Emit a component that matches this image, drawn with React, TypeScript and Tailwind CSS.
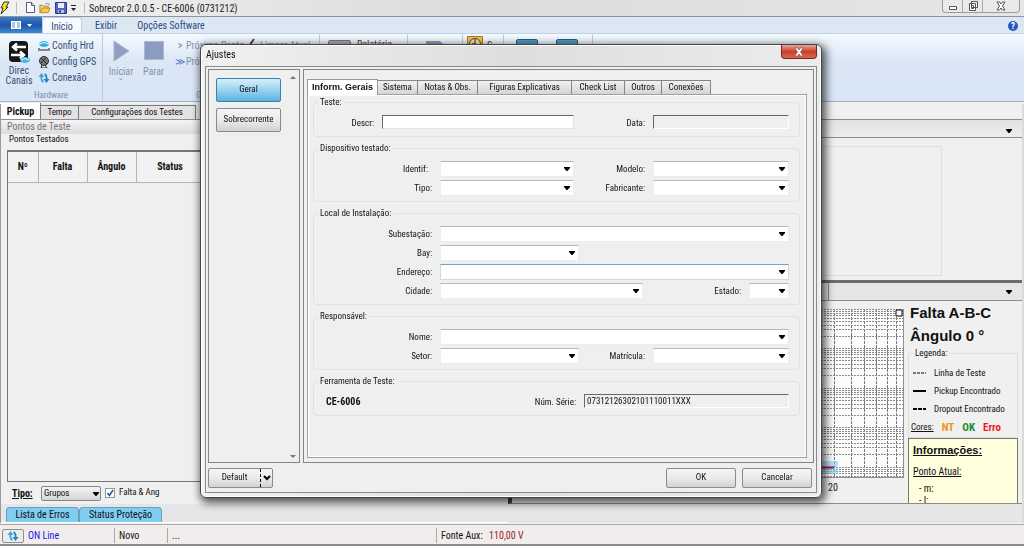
import React from "react";
import clsx from "clsx";

interface ComboProps {
  id: string;
  className?: string;
  active?: boolean;
}

interface LabelProps {
  htmlFor: string;
  className?: string;
  children: React.ReactNode;
}

const chartColumns = [180, 215, 240, 262, 280, 296, 322, 339, 352, 364, 375, 384, 391];
const decades = [0, 39, 79, 118, 158];

function Label({ htmlFor, className, children }: LabelProps) {
  return (
    <label htmlFor={htmlFor} className={clsx("text-right leading-4", className)}>
      {children}
    </label>
  );
}

function Caret({ className }: { className?: string }) {
  return (
    <svg viewBox="0 0 6 4" className={clsx("w-1.5 h-1", className)} aria-hidden="true">
      <path d="M0 0h6v1L3.5 4h-1L0 1z" fill="#000" />
    </svg>
  );
}

function Combo({ id, className, active }: ComboProps) {
  return (
    <div className={clsx("relative h-4", className)}>
      <select
        id={id}
        className={clsx(
          "block w-full h-full appearance-none bg-white border outline-none px-1",
          active ? "border-[#c5dcec] border-t-[#7ba3c4]" : "border-[#ececec] border-t-[#b4b7bb]"
        )}
      >
        <option value=""></option>
      </select>
      <Caret className="absolute right-1 top-1.5 pointer-events-none" />
    </div>
  );
}

function Group({ title, children }: { title: string; children: React.ReactNode }) {
  return (
    <fieldset className="border border-[#dfe1e3] rounded-sm pt-[7px] pb-[5px] pr-2.5 flex flex-col gap-[3px] min-w-0">
      <legend className="ml-1 px-0.5 leading-[11px]">{title}</legend>
      {children}
    </fieldset>
  );
}

function Row({ children }: { children: React.ReactNode }) {
  return <div className="flex gap-2">{children}</div>;
}

function TitleBar() {
  return (
    <header className="flex items-center h-[17px] shrink-0 pl-1 bg-linear-to-r from-[#f2f2f2] via-[#dcdcdc] via-45% to-[#e6e6e6] border-b border-[#8d949c] text-[10px] text-[#222]">
      <svg viewBox="0 0 10 14" className="w-2.5 h-3.5 -ml-1" aria-hidden="true">
        <path d="M4 1h5L6 6h2L1 13l2-6H1z" fill="#f5e51b" stroke="#333" strokeWidth="1" />
      </svg>
      <span className="w-px h-3 bg-[#bbb] ml-1.5" />
      <div className="flex items-center gap-1 ml-2">
        <button aria-label="Novo arquivo">
          <svg viewBox="0 0 10 12" className="block w-2.5 h-3">
            <path d="M1.500.5h5l3 3v7h-8z" fill="#fff" stroke="#4f5c86" />
            <path d="M6.500.5v3h3" fill="#ccd6ee" stroke="#4f5c86" />
          </svg>
        </button>
        <button aria-label="Abrir">
          <svg viewBox="0 0 13 12" className="block w-3 h-3">
            <path d="M1 11V3h3l1 1h5v2" fill="#f6d273" stroke="#ac8332" />
            <path d="M1 11l3-5h8l-2 5z" fill="#ffc94a" stroke="#b8862c" />
            <path d="M7 2c2-2 4-1 4 1" fill="none" stroke="#446fb4" />
          </svg>
        </button>
        <button aria-label="Salvar">
          <svg viewBox="0 0 12 12" className="block w-3 h-3">
            <path d="M.5.5h11v11h-11z" fill="#5362c6" stroke="#2e3990" />
            <path d="M3 1h6v5H3z" fill="#e9edff" />
            <path d="M3 8h6v3H3z" fill="#b9c1ea" />
            <path d="M4 8.500h2v2H4z" fill="#27307c" />
          </svg>
        </button>
        <button aria-label="Personalizar">
          <svg viewBox="0 0 5 7" className="block w-[5px] h-[7px]">
            <path d="M0 0h5v1H0zM0 3h5L2.500 6z" fill="#222" />
          </svg>
        </button>
      </div>
      <span className="w-px h-3 bg-[#bbb] ml-2 mr-1" />
      <h1>Sobrecor 2.0.0.5 - CE-6006 (0731212)</h1>
      <div className="flex ml-auto mr-1 self-start h-[13px] border border-t-0 border-[#9c9c9c] rounded-b-sm divide-x divide-[#a9a9a9] bg-[#e9e9e9]">
        <button aria-label="Minimizar" className="w-5 grid place-items-center">
          <svg viewBox="0 0 10 10" className="w-2.5 h-2.5">
            <path d="M1.500 5.500h7v3h-7z" fill="#fff" stroke="#555" />
          </svg>
        </button>
        <button aria-label="Restaurar" className="w-5 grid place-items-center">
          <svg viewBox="0 0 10 10" className="w-2.5 h-2.5">
            <path d="M3.500.5h6v6h-6zM1.500 2.500h6v7h-6zM3.500 4.500h2v3h-2z" fill="#fff" stroke="#555" />
          </svg>
        </button>
        <button aria-label="Fechar" className="w-9 grid place-items-center">
          <svg viewBox="0 0 10 10" className="w-2.5 h-2.5">
            <path d="M1 1h2.500L5 3l1.500-2H9L6.500 5 9 9H6.500L5 7 3.500 9H1l2.500-4z" fill="#fff" stroke="#555" />
          </svg>
        </button>
      </div>
    </header>
  );
}

function Ribbon() {
  return (
    <div className="shrink-0">
      <nav className="flex items-end h-[17px] bg-[#dce7f4] text-[10px] text-[#2a4c7d] border-b border-[#c3d2e5]">
        <button aria-label="Arquivo" className="flex items-center justify-center gap-1.5 w-[42px] h-4 bg-linear-to-b from-[#3c7cc9] via-[#1f56a5] to-[#3f8bd8]">
          <svg viewBox="0 0 10 8" className="w-2.5 h-2">
            <path d="M0 0h10v8H0z" fill="#fff" />
            <path d="M1 2h3M1 4h3M1 6h3M6 2h3M6 4h3M6 6h3" stroke="#5e8fce" />
          </svg>
          <svg viewBox="0 0 5 3" className="w-[5px] h-[3px]">
            <path d="M0 0h5L2.500 3z" fill="#fff" />
          </svg>
        </button>
        <button className="w-10 h-4 pt-0.5 leading-[13px] bg-[#f7fbff] border border-b-0 border-[#bccfe4] rounded-t-sm">Início</button>
        <button className="w-12 h-4 pt-0.5 leading-[14px]">Exibir</button>
        <button className="w-[82px] h-4 pt-0.5 leading-[14px]">Opções Software</button>
        <button aria-label="Ajuda" className="ml-auto mr-1.5 mb-0.5 w-2.5 h-2.5 rounded-full bg-[#2459c4] text-white font-bold text-[9px] leading-[10px]">
          ?
        </button>
      </nav>
      <div className="flex h-[68px] bg-linear-to-b from-[#f4f9fe] via-[#dbe7f5] via-40% to-[#d9e6f6] border-b border-[#a5b2c2] text-[10px] text-[#35507a]">
        <section className="flex flex-col w-[103px] border-r border-[#bccadb]">
          <div className="flex flex-1 pt-1.5">
            <button className="w-[38px] flex flex-col items-center leading-[10px]">
              <svg viewBox="0 0 24 24" className="w-6 h-6 mb-0.5">
                <rect x="2" y="1" width="19" height="21" rx="4" fill="#171717" />
                <path d="M19 7H7M10 3.500L6 7l4 3.500M4 15h12M13 11.500l4 3.500-4 3.500" fill="none" stroke="#fff" strokeWidth="2.500" />
                <ellipse cx="18" cy="20" rx="5" ry="3" fill="#46b8e6" />
                <path d="M14 20q4-3 8 0" fill="none" stroke="#d9f4ff" />
              </svg>
              Direc
              <br />
              Canais
            </button>
            <div className="flex flex-col gap-1 items-start leading-3">
              <button className="flex items-center gap-0.5">
                <svg viewBox="0 0 12 12" className="w-3 h-3">
                  <ellipse cx="6" cy="4" rx="5" ry="3" fill="#39aedf" />
                  <path d="M1 4q5-3 10 0" fill="none" stroke="#e3f7ff" />
                  <path d="M1 8v3M3 9v2M5 9v2M7 9v2M9 9v2M11 8v3" stroke="#222" />
                </svg>
                Config Hrd
              </button>
              <button className="flex items-center gap-0.5">
                <svg viewBox="0 0 12 12" className="w-3 h-3">
                  <circle cx="6" cy="5" r="4.500" fill="#777" stroke="#333" />
                  <path d="M3 2l6 6M8 2L3 7M4 9l-1 3h6L7 9" fill="none" stroke="#222" />
                </svg>
                Config GPS
              </button>
              <button className="flex items-center gap-0.5">
                <SyncIcon className="w-3 h-3" />
                Conexão
              </button>
            </div>
          </div>
          <span className="text-center text-[9px] leading-3 text-[#7d8da6]">Hardware</span>
        </section>
        <section className="flex flex-col w-[217px] border-r border-[#bccadb] text-[#8392aa]">
          <div className="flex flex-1 pt-1.5">
            <button disabled className="w-9 flex flex-col items-center leading-3">
              <svg viewBox="0 0 20 24" className="w-5 h-6 mb-0.5">
                <path d="M3 1l15 10L3 21z" fill="#8fa0c3" stroke="#a8b5d0" />
              </svg>
              Iniciar
              <svg viewBox="0 0 5 3" className="w-1 h-0.5">
                <path d="M0 0l2.500 3L5 0" fill="none" stroke="#8392aa" />
              </svg>
            </button>
            <button disabled className="w-[29px] flex flex-col items-center leading-3">
              <svg viewBox="0 0 20 24" className="w-5 h-6 mb-0.5">
                <path d="M.5 1.500h19v18H.5z" fill="#8c9cc0" stroke="#aab7d3" />
              </svg>
              Parar
            </button>
            <div className="flex flex-col items-start gap-1 pl-1.5 leading-3 whitespace-nowrap">
              <button disabled><span className="inline-block w-3 text-[#5477bb]">&gt;</span>Próximo Ponto</button>
              <button disabled><span className="inline-block w-3 text-[#5477bb]">≫</span>Próximo Teste</button>
            </div>
            <svg viewBox="0 0 8 8" className="w-2 h-2 ml-1 -mt-0.5">
              <path d="M1 8l5-7" stroke="#444" strokeWidth="2" />
            </svg>
            <span className="leading-3 pl-1">Limpar Atual</span>
          </div>
          <span className="text-center text-[9px] leading-3">Geração</span>
        </section>
        <section className="flex gap-1.5 items-start w-[88px] pt-1.5 pl-2 border-r border-[#bccadb]">
          <span className="w-[23px] h-4 rounded-t-xs bg-[#a9adb3] border border-[#777]" />
          <span className="leading-[10px] text-[#444]">Relatório</span>
        </section>
        <section className="flex justify-center w-[55px] pt-1.5 border-r border-[#bccadb]">
          <svg viewBox="0 0 18 10" className="w-[18px] h-2.5">
            <path d="M0 1h14l4 4-4 4H0z" fill="#8c9cc0" />
          </svg>
        </section>
        <section className="flex items-start w-[41px] pt-0.5 pl-1 border-r border-[#bccadb]">
          <svg viewBox="0 0 16 16" className="w-4 h-4">
            <path d="M.5.5h15v15H.5z" fill="#e6c15a" stroke="#a67d20" />
            <circle cx="8" cy="8" r="5.500" fill="#f8e9b1" stroke="#5c4616" />
            <path d="M8 3v5H5" fill="none" stroke="#222" />
          </svg>
          <span className="leading-3 pt-1 pl-1 text-[#444]">S</span>
        </section>
        <section className="flex gap-[18px] items-start w-[89px] pt-[5px] pl-3 border-r border-[#bccadb]">
          <span className="w-[22px] h-4 bg-[#4f9ac4] border border-[#24607f] rounded-t-xs" />
          <span className="w-[22px] h-4 bg-[#4f9ac4] border border-[#24607f] rounded-t-xs" />
        </section>
      </div>
    </div>
  );
}

function SyncIcon({ className }: { className?: string }) {
  return (
    <svg viewBox="0 0 12 12" className={className} aria-hidden="true">
      <path d="M5.500 10Q3 9 3.500 4" fill="none" stroke="#3ba7d6" strokeWidth="1.800" />
      <path d="M.5 5l3-4 3 4z" fill="#3ba7d6" />
      <path d="M6.500 2Q9 3 8.500 8" fill="none" stroke="#2583b8" strokeWidth="1.800" />
      <path d="M5.500 7l3 4 3-4z" fill="#2583b8" />
    </svg>
  );
}

function TestPanel() {
  return (
    <section className="flex flex-col min-h-0 border-l border-[#9a9a9a] bg-[#f0f0f0]">
      <div className="flex items-end h-4 border-b border-[#8f8f8f] bg-[#e9eaec] text-[9px]">
        <button className="w-10 h-4 bg-white border-r border-[#777] font-bold text-[10px]">Pickup</button>
        <button className="w-[38px] h-3.5 border-t border-r border-[#777] bg-[#e3e3e3]">Tempo</button>
        <button className="w-[117px] h-3.5 border-t border-r border-[#777] bg-[#e3e3e3]">Configurações dos Testes</button>
      </div>
      <h2 className="pl-1.5 leading-[14px] text-[10px] text-[#777] bg-linear-to-b from-[#f4f4f4] to-[#dcdcdc]">Pontos de Teste</h2>
      <h3 className="pl-2 leading-[11px] text-[9px]">Pontos Testados</h3>
      <div className="flex-1 min-h-0 mt-[5px] mx-1.5 border border-t-2 border-[#747474] bg-[#efefef]">
        <table className="w-full table-fixed border-collapse text-[10px]">
          <thead>
            <tr className="h-[30px] bg-[#f2f2f2] border-b border-[#b5b5b5] divide-x divide-[#b5b5b5]">
              <th className="w-[30px]">Nº</th>
              <th className="w-[49px]">Falta</th>
              <th className="w-[49px]">Ângulo</th>
              <th className="w-[68px]">Status</th>
              <th></th>
            </tr>
          </thead>
        </table>
      </div>
      <div className="flex items-center h-[22px] pl-[11px] text-[9px]">
        <label htmlFor="tipo-grupo" className="font-bold underline text-[10px] w-[29px]">Tipo:</label>
        <div className="relative">
          <select id="tipo-grupo" className="block w-[60px] h-[15px] pl-0.5 appearance-none border border-[#858585] rounded-xs bg-linear-to-b from-[#f4f4f4] to-[#d6d6d6]">
            <option>Grupos</option>
          </select>
          <Caret className="absolute right-0.5 top-1.5 pointer-events-none" />
        </div>
        <label className="flex items-center gap-1 ml-1">
          <span className="relative w-2.5 h-2.5">
            <input type="checkbox" defaultChecked className="peer block appearance-none w-2.5 h-2.5 border border-[#8e9aa8] bg-white" />
            <svg viewBox="0 0 10 10" className="absolute inset-0 hidden peer-checked:block pointer-events-none">
              <path d="M2.500 5l2 2.500L8 2" fill="none" stroke="#2a53a0" strokeWidth="1.500" />
            </svg>
          </span>
          Falta &amp; Ang
        </label>
      </div>
      <div className="flex items-end h-[19px] pl-[5px] text-[10px] bg-[#e4e6e8] border-b border-white">
        <button className="w-[73px] h-[15px] leading-[14px] bg-[#7fcdf1] border border-b-0 border-[#6ba0bd] rounded-t">Lista de Erros</button>
        <button className="w-[83px] h-[15px] leading-[14px] bg-[#7fcdf1] border border-b-0 border-[#6ba0bd] rounded-t">Status Proteção</button>
      </div>
    </section>
  );
}

function Chart() {
  return (
    <svg viewBox="0 0 392 196" preserveAspectRatio="xMaxYMin slice" className="w-full h-full" role="img" aria-label="Gráfico de pickup">
      <rect width="392" height="169" fill="#fcfcfc" />
      {chartColumns.map((x) => (
        <path key={x} d={`M${x}.5 0V169`} stroke="#777" strokeDasharray="3 1" />
      ))}
      {decades.map((top) =>
        [10, 9, 8, 7, 6, 5, 4, 3, 2].map((n) => {
          const y = Math.round(top + 39 * (1 - Math.log10(n)));
          return y < 169 ? <path key={`${top}-${n}`} d={`M0 ${y}.5H392`} stroke="#8a8a8a" strokeDasharray="2 1" /> : null;
        })
      )}
      <path d="M0 152h326v13H0z" fill="#8ccbe8" fillOpacity="0.6" />
      <path d="M0 158.500h322" stroke="#a3134c" strokeWidth="2" />
      <path d="M0 168.500h392M391.500 0v169" stroke="#8f8f8f" />
      <path d="M384 1h6v6h-6z" fill="#fff" stroke="#000" />
      <text x="321" y="182" textAnchor="middle" fontSize="10" fill="#222">20</text>
    </svg>
  );
}

function ResultPanel() {
  return (
    <section className="flex flex-col min-h-0 bg-[#f0f0f0] border-r-2 border-[#dadada]">
      <div className="flex justify-end items-center h-[19px] mt-[15px] pr-2.5 border-y border-[#8b8b8b] bg-linear-to-b from-[#e2e2e2] to-[#ececec]">
        <Caret className="mt-1" />
      </div>
      <div className="h-[145px] border-b-3 border-[#6d6d6d] pt-2 pb-1">
        <div className="h-full mr-20 border border-[#dedede]" />
      </div>
      <div className="flex items-center h-[18px] pr-2.5 border-b border-[#8b8b8b] bg-[#e6e6e6]">
        <span className="w-[321px] h-full border-r border-[#8b8b8b]" />
        <Caret className="ml-auto" />
      </div>
      <div className="flex flex-1 min-h-0 border-b border-[#8b8b8b] border-l-4 border-l-[#444] pt-2">
        <div className="flex-1 min-w-0 min-h-0">
          <Chart />
        </div>
        <aside className="flex flex-col w-[118px] shrink-0 min-h-0 pl-1 pr-1 overflow-hidden -mt-2 text-[10px]">
          <p className="pl-0.5 font-bold text-[15px] leading-[23px] whitespace-nowrap font-['Liberation_Sans',sans-serif]">
            Falta A-B-C
            <br />
            Ângulo 0 °
          </p>
          <fieldset className="border border-[#dfdfdf] px-1 text-[9px]">
            <legend className="leading-[13px] px-0.5">Legenda:</legend>
            <ul className="leading-[18px] pt-1 whitespace-nowrap">
              <li className="flex items-center gap-2">
                <svg viewBox="0 0 13 2" className="w-[13px] h-0.5"><path d="M0 1h13" stroke="#000" strokeDasharray="3 1" /></svg>
                Linha de Teste
              </li>
              <li className="flex items-center gap-2">
                <svg viewBox="0 0 13 2" className="w-[13px] h-0.5"><path d="M0 1h13" stroke="#000" strokeWidth="2" /></svg>
                Pickup Encontrado
              </li>
              <li className="flex items-center gap-2">
                <svg viewBox="0 0 13 2" className="w-[13px] h-0.5"><path d="M0 1h13" stroke="#000" strokeWidth="2" strokeDasharray="4 1" /></svg>
                Dropout Encontrado
              </li>
            </ul>
            <p className="flex gap-2 leading-[19px] -ml-0.5">
              <span className="underline">Cores:</span>
              <b className="text-[11px] text-[#f5921e]">NT</b>
              <b className="text-[11px] text-[#1d8a2c]">OK</b>
              <b className="text-[11px] text-[#ee1c25]">Erro</b>
            </p>
          </fieldset>
          <div className="flex-1 min-h-0 overflow-hidden pl-1 bg-[#ffffde] border border-b-0 border-[#777]">
            <h2 className="font-bold underline text-[11px] leading-[22px] font-['Liberation_Sans',sans-serif]">Informações:</h2>
            <p className="underline leading-[22px]">Ponto Atual:</p>
            <p className="pl-1.5 leading-3">- m:</p>
            <p className="pl-1.5 leading-3">- I:</p>
          </div>
        </aside>
      </div>
      <div className="h-[19px] bg-[#e6e6e6]" />
    </section>
  );
}

function StatusBar() {
  return (
    <footer className="shrink-0 border-t border-[#aaa] bg-[#f1eded] border-b-2 border-b-[#8c8c8c] text-[10px]">
      <div className="flex items-center h-[19px] pl-0.5 pt-0.5 leading-[15px]">
        <button aria-label="Atualizar" className="grid place-items-center w-[22px] h-3.5 border border-[#8f8f8f] bg-[#ececec] rounded-xs">
          <SyncIcon className="w-3 h-3" />
        </button>
        <span className="w-[90px] pl-1 text-[#1f16e8]">ON Line</span>
        <span className="w-[53px] pl-1 border-l border-[#aaa]">Novo</span>
        <span className="w-[269px] pl-1 border-l border-[#aaa]">...</span>
        <span className="pl-1 border-l border-[#aaa]">
          Fonte Aux: <span className="pl-1 text-[#9c1c1c]">110,00 V</span>
        </span>
      </div>
    </footer>
  );
}

const tabs = [
  { name: "Sistema", width: "w-10" },
  { name: "Notas & Obs.", width: "w-[60px]" },
  { name: "Figuras Explicativas", width: "w-[94px]" },
  { name: "Check List", width: "w-[53px]" },
  { name: "Outros", width: "w-[37px]" },
  { name: "Conexões", width: "w-[49px]" },
];

const buttonStyle = "border border-[#8b8b8b] rounded-xs bg-linear-to-b from-[#f4f4f4] via-[#ebebeb] to-[#d2d2d2]";

function SettingsForm() {
  return (
    <div className="flex flex-col gap-1.5 border border-[#a0a0a0] shadow-[inset_0_0_0_1px_#fff] pt-0.5 pb-[41px] pl-[5px] pr-1.5">
      <Group title="Teste:">
        <Row>
          <Label htmlFor="descr" className="w-[60px]">Descr:</Label>
          <input id="descr" className="w-48 h-3.5 px-1 bg-white border border-[#e3e3e3] border-t-[#696969] border-l-[#696969] outline-none" />
          <Label htmlFor="data" className="w-[63px]">Data:</Label>
          <input id="data" readOnly className="flex-1 min-w-0 h-3.5 px-1 bg-[#efefef] border border-white border-t-[#696969] border-l-[#696969]" />
        </Row>
      </Group>
      <Group title="Dispositivo testado:">
        <Row>
          <Label htmlFor="identif" className="w-[118px] pr-1">Identif:</Label>
          <Combo id="identif" className="w-[134px]" />
          <Label htmlFor="modelo" className="w-[63px]">Modelo:</Label>
          <Combo id="modelo" className="flex-1" />
        </Row>
        <Row>
          <Label htmlFor="tipo" className="w-[118px]">Tipo:</Label>
          <Combo id="tipo" className="w-[134px]" />
          <Label htmlFor="fabricante" className="w-[63px]">Fabricante:</Label>
          <Combo id="fabricante" className="flex-1" />
        </Row>
      </Group>
      <Group title="Local de Instalação:">
        <Row>
          <Label htmlFor="subestacao" className="w-[118px]">Subestação:</Label>
          <Combo id="subestacao" className="flex-1" />
        </Row>
        <Row>
          <Label htmlFor="bay" className="w-[118px]">Bay:</Label>
          <Combo id="bay" className="w-[139px]" />
        </Row>
        <Row>
          <Label htmlFor="endereco" className="w-[118px]">Endereço:</Label>
          <Combo id="endereco" className="flex-1" active />
        </Row>
        <Row>
          <Label htmlFor="cidade" className="w-[118px]">Cidade:</Label>
          <Combo id="cidade" className="w-[203px]" />
          <Label htmlFor="estado" className="flex-1">Estado:</Label>
          <Combo id="estado" className="w-10" />
        </Row>
      </Group>
      <Group title="Responsável:">
        <Row>
          <Label htmlFor="nome" className="w-[118px]">Nome:</Label>
          <Combo id="nome" className="flex-1" />
        </Row>
        <Row>
          <Label htmlFor="setor" className="w-[118px]">Setor:</Label>
          <Combo id="setor" className="w-[139px]" />
          <Label htmlFor="matricula" className="w-[58px]">Matrícula:</Label>
          <Combo id="matricula" className="flex-1" />
        </Row>
      </Group>
      <Group title="Ferramenta de Teste:">
        <Row>
          <strong className="flex-1 pl-3 leading-4 text-[10px]">CE-6006</strong>
          <Label htmlFor="serie">Núm. Série:</Label>
          <input
            id="serie"
            readOnly
            defaultValue="07312126302101110011XXX"
            className="w-[205px] h-3.5 px-0.5 bg-[#efefef] border border-white border-t-[#696969] border-l-[#696969]"
          />
        </Row>
      </Group>
    </div>
  );
}

function SettingsDialog() {
  return (
    <div className="fixed inset-0 flex items-start justify-center pt-11 pr-0.5">
      <div
        role="dialog"
        aria-labelledby="ajustes"
        className="w-[622px] px-1 pb-1 text-[9px] rounded-md border border-[#444] bg-linear-to-r from-[#f1f1f1] via-[#dedede] to-[#ececec] shadow-[inset_0_0_0_1px_#fff,2px_3px_8px_2px_rgba(0,0,0,0.65)]"
      >
        <div className="flex items-start justify-between pl-px h-[21px]">
          <h2 id="ajustes" className="text-[10px] leading-5">Ajustes</h2>
          <button aria-label="Fechar" className="grid place-items-center w-9 h-3.5 rounded-b-sm border border-t-0 border-[#6e2a22] bg-linear-to-b from-[#e5a295] via-[#c9402b] to-[#d9674f]">
            <svg viewBox="0 0 10 10" className="w-2.5 h-2.5">
              <path d="M1 1h2.500L5 3l1.500-2H9L6.500 5 9 9H6.500L5 7 3.500 9H1l2.500-4z" fill="#fff" stroke="#6d4038" strokeWidth="0.500" />
            </svg>
          </button>
        </div>
        <div className="border border-[#8a8a8a] bg-[#efefef] p-0.5 pb-1">
          <div className="flex gap-[3px]">
            <div className="flex justify-between w-[92px] pl-[7px] pt-2 pr-0.5 pb-0.5 border border-[#848484]">
              <div className="flex flex-col gap-1.5">
                <button className="w-[65px] h-6 border border-[#3b7fa8] rounded-xs bg-linear-to-b from-[#d6effb] via-[#98d3f0] to-[#57b2e0]">Geral</button>
                <button className={clsx("w-[65px] h-6", buttonStyle)}>Sobrecorrente</button>
              </div>
              <div className="flex flex-col justify-between -mt-1">
                <svg viewBox="0 0 8 6" className="w-2 h-1.5"><path d="M1 5l3-3 3 3z" fill="#777" /></svg>
                <svg viewBox="0 0 8 6" className="w-2 h-1.5"><path d="M1 1l3 3 3-3z" fill="#777" /></svg>
              </div>
            </div>
            <div className="flex-1 min-w-0 pl-[3px] pr-1.5 pt-2 pb-1 border border-[#848484]">
              <div className="flex items-end h-4 whitespace-nowrap">
                <button className="w-[71px] h-4 -mb-px bg-white border border-b-0 border-[#999] font-bold text-[9px] font-['Liberation_Sans',sans-serif]">
                  Inform. Gerais
                </button>
                {tabs.map((tab) => (
                  <button key={tab.name} className={clsx(tab.width, "h-3.5 border border-l-0 border-b-0 border-[#858585] bg-linear-to-b from-[#f1f1f1] to-[#d5d5d5]")}>
                    {tab.name}
                  </button>
                ))}
              </div>
              <SettingsForm />
            </div>
          </div>
          <div className="flex items-center gap-1.5 pt-[5px] pr-0.5">
            <div className={clsx("flex w-[65px] h-5 mr-auto", buttonStyle)}>
              <button className="flex-1">Default</button>
              <button aria-label="Mais opções" className="grid place-items-center w-3 border-l border-dashed border-black">
                <svg viewBox="0 0 8 6" className="w-2 h-1.5"><path d="M1 1l3 3 3-3" fill="none" stroke="#000" strokeWidth="2" /></svg>
              </button>
            </div>
            <button className={clsx("w-[70px] h-5", buttonStyle)}>OK</button>
            <button className={clsx("w-[70px] h-5", buttonStyle)}>Cancelar</button>
          </div>
        </div>
      </div>
    </div>
  );
}

export default function App() {
  return (
    <div className="flex flex-col h-screen overflow-hidden bg-[#f0f0f0] text-[#111] font-['Roboto_Condensed',Roboto,'Liberation_Sans',sans-serif]">
      <TitleBar />
      <Ribbon />
      <main className="grid grid-cols-[508fr_516fr] grid-rows-1 flex-1 min-h-0 pt-0.5 pb-px">
        <TestPanel />
        <ResultPanel />
      </main>
      <StatusBar />
      <SettingsDialog />
    </div>
  );
}
